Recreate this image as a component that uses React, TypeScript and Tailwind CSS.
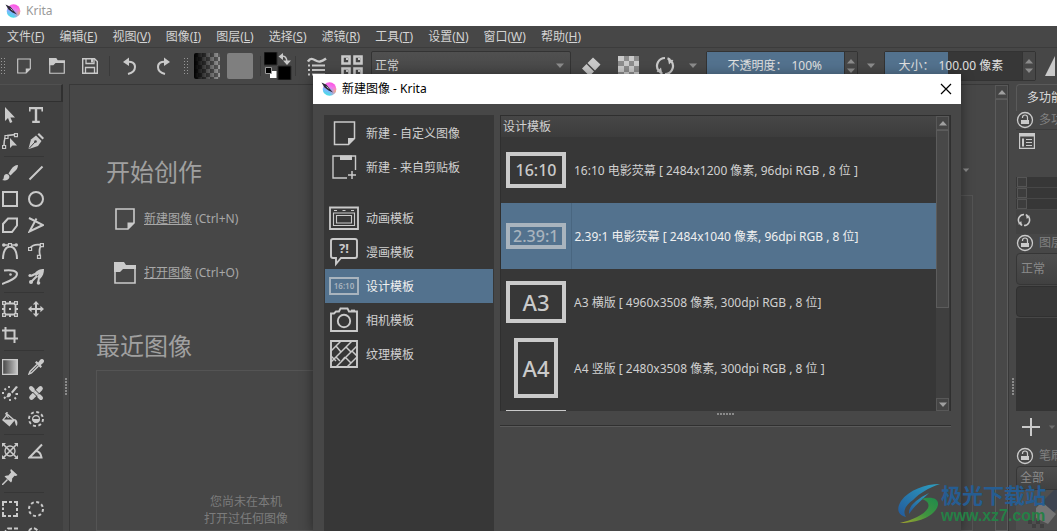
import React from 'react';

interface IconProps {
  className?: string;
  box?: string;
  children: React.ReactNode;
}

const Icon: React.FC<IconProps> = ({ className = 'w-4 h-4', box = '0 0 16 16', children }) => (
  <svg className={`shrink-0 ${className}`} viewBox={box} fill="none" stroke="currentColor" aria-hidden="true">
    {children}
  </svg>
);

const solid = { fill: 'currentColor', stroke: 'none' };

/* Shared icons */
const KritaLogo = () => (
  <Icon className="w-4 h-4">
    <defs>
      <linearGradient id="kritaHue" x1="0.65" y1="0" x2="0.3" y2="1">
        <stop offset="0" stopColor="#ff4fe0" />
        <stop offset="0.35" stopColor="#f07af0" />
        <stop offset="0.6" stopColor="#7fb4ff" />
        <stop offset="1" stopColor="#3fe6e0" />
      </linearGradient>
      <radialGradient id="kritaWarm" cx="1" cy="0.7" r="0.5">
        <stop offset="0" stopColor="#ffb060" />
        <stop offset="1" stopColor="#ff7ad0" stopOpacity="0" />
      </radialGradient>
    </defs>
    <circle cx="8.500" cy="8" r="6.800" fill="url(#kritaHue)" stroke="none" />
    <circle cx="8.500" cy="8" r="6.800" fill="url(#kritaWarm)" stroke="none" />
    <path d="M0.5 1.5 5.500 3.800 8.500 7.500l3.500 4-4.500-2L3.500 6.500Z" fill="#2b2b38" stroke="none" />
    <path d="M5.500 5.500 7.500 7.500" stroke="#d8d8d8" strokeWidth=".8" />
  </Icon>
);

const PageIcon = ({ className }: { className?: string }) => (
  <Icon className={className} box="0 0 20 22">
    <path d="M1 1h18v14l-6 6H1Z" strokeWidth="1.6" />
    <path d="M19.5 14.5h-7v7Z" {...solid} />
  </Icon>
);

const FolderIcon = ({ className }: { className?: string }) => (
  <Icon className={className} box="0 0 22 22">
    <path d="M1 4v17h20V4" strokeWidth="1.6" />
    <path d="M0 0h10l2 3h10v4H9L6 10H0Z" {...solid} />
  </Icon>
);

const Caret = ({ className = 'w-2.5 h-1.5' }: { className?: string }) => (
  <Icon className={className} box="0 0 10 6">
    <path d="M1 .5h8L5 5Z" {...solid} />
  </Icon>
);

const CaretUp = () => (
  <Icon className="w-2.5 h-1.5" box="0 0 10 6">
    <path d="M1 5.5h8L5 1Z" {...solid} />
  </Icon>
);

const ReloadIcon = ({ className }: { className?: string }) => (
  <Icon className={className} box="0 0 20 20">
    <path d="M10 2a8 8 0 0 0-6.500 12.600M10 18a8 8 0 0 0 6.500-12.600" strokeWidth="2.2" />
    <path d="M12.500 2.400a8 8 0 0 1 2.800 1.600M7.500 17.600a8 8 0 0 1-2.800-1.600" strokeWidth="2.2" />
    <path d="M1.500 16 7 16.500 6 11.500ZM18.500 4 13 3.500l1 5Z" {...solid} />
  </Icon>
);

const LockIcon = () => (
  <Icon className="w-[18px] h-[18px] text-[#cacaca]" box="0 0 18 18">
    <circle cx="9" cy="9" r="7.5" strokeWidth="1.3" />
    <path d="M6.500 7V6.500a2.500 2.500 0 0 1 5 0V9" strokeWidth="1.2" />
    <path d="M5 9h8v4H5Z" {...solid} />
  </Icon>
);

/* Toolbox icons, split in the groups the box shows */
const toolGroups: { name: string; art: React.ReactNode }[][] = [
  [
    { name: '选择形状', art: <path d="M3 0v14l3-3 2 5 2.4-1-2-4.6H13Z" {...solid} /> },
    { name: '文本', art: <path d="M1 0h14v4.5h-1.6V2.2H9.2v11.6h2.6V16H4.2v-2.2h2.6V2.2H2.6v2.3H1Z" {...solid} /> },
    {
      name: '编辑形状',
      art: (
        <>
          <path d="M2 12.5C2 7 3 3.5 5 3m0-.5L13 1.600" strokeWidth="1.6" />
          <path d="M.6 12.500h3v3h-3ZM3 2.500h3v3H3ZM12.500.6h3v3h-3Z" fill="#404040" strokeWidth="1.2" />
          <path d="M8 5v10l2.500-2.500H15Z" {...solid} />
        </>
      ),
    },
    {
      name: '书法',
      art: (
        <>
          <path d="M.5 15.500 3 6.500l5-4 5.500 5.500-3.500 5-9 3Z" {...solid} />
          <path d="M9.500 1.500 11 0l5 5-1.500 1.500Z" {...solid} />
          <path d="M1 15.500 7 9" stroke="#404040" />
          <circle cx="7.500" cy="8.500" r="1.300" fill="#404040" stroke="none" />
        </>
      ),
    },
  ],
  [
    {
      name: '手绘笔刷',
      art: (
        <path d="M0 15c2-.5 1.500-2 2-4 .6-2 3-2.600 4.500-1.200 1.600 1.500 1 4-1 5C4 15.600 2 15.500 0 15ZM6.500 8.500 9 4.500C11 1.500 13 0 16 0c0 3-1.500 5-4 7L8.500 10.500Z" {...solid} />
      ),
    },
    { name: '直线', art: <path d="M1.500 14.500l13-13" strokeWidth="2" /> },
    { name: '矩形', art: <path d="M1 1h14v14H1Z" strokeWidth="2" /> },
    { name: '椭圆', art: <circle cx="8" cy="8" r="7" strokeWidth="2" /> },
    { name: '多边形', art: <path d="M6 1.500h9v7L10 15H1V7Z" strokeWidth="2" /> },
    { name: '折线', art: <path d="M1 1l14 7L1.500 14.500 8.500 1.500" strokeWidth="2" /> },
    {
      name: '贝塞尔曲线',
      art: (
        <>
          <path d="M1 16C1 8 4 3.500 8 3.500S15 8 15 16" strokeWidth="2" />
          <path d="M2 2h12" strokeWidth="1.500" />
          <circle cx="1.800" cy="2" r="1.800" {...solid} />
          <circle cx="14.200" cy="2" r="1.800" {...solid} />
          <path d="M6.500.6h3v3h-3Z" fill="#404040" strokeWidth="1.200" />
        </>
      ),
    },
    {
      name: '手绘路径',
      art: (
        <>
          <path d="M2 5C5 1 9 1 14 2M14 2c-3 2-3 6-2 11" strokeWidth="1.800" />
          <path d="M.6 4.500h3v3h-3ZM12.400.6h3v3h-3ZM9.500 12.400h3v3h-3Z" fill="#404040" strokeWidth="1.200" />
        </>
      ),
    },
    {
      name: '力学笔刷',
      art: (
        <>
          <path d="M2 1.500C10 .5 15 2 15 5c0 4-7 7-15 10" strokeWidth="2" />
          <circle cx="8.500" cy="5.500" r="1.300" {...solid} />
        </>
      ),
    },
    {
      name: '多路笔刷',
      art: (
        <>
          <path d="M6 5c3-4 6-5 10-5 0 4-1 7-4 10l-3-2 2-3-3 2Z" {...solid} />
          <path d="M7 5 3 7M9 7l-6 6M11 9l-1 5" strokeWidth="2" />
          <circle cx="2" cy="6.500" r="1.600" {...solid} />
          <circle cx="3" cy="13" r="2" {...solid} />
          <circle cx="10.500" cy="14" r="1.800" {...solid} />
        </>
      ),
    },
  ],
  [
    {
      name: '变换',
      art: (
        <>
          <path d="M2.500 2.500h11v11h-11Z" strokeWidth="1.800" />
          <path d="M0 0h4v4H0ZM12 0h4v4h-4ZM0 12h4v4H0ZM12 12h4v4h-4ZM7 0h2v3H7ZM7 13h2v3H7ZM0 7h3v2H0ZM13 7h3v2h-3ZM7 7h2v2H7Z" {...solid} />
          <path d="M1.300 1.300h1.500v1.500H1.300ZM13.200 1.300h1.500v1.500h-1.500ZM1.300 13.200h1.500v1.500H1.300ZM13.200 13.200h1.500v1.500h-1.500Z" fill="#404040" stroke="none" />
        </>
      ),
    },
    {
      name: '移动',
      art: (
        <>
          <path d="M8 2v12M2 8h12" strokeWidth="2" />
          <path d="M8 0l3.200 3.600H4.800ZM8 16l3.200-3.600H4.800ZM0 8l3.600-3.200v6.400ZM16 8l-3.600-3.200v6.400Z" {...solid} />
        </>
      ),
    },
    { name: '裁剪', art: <path d="M3.500 0v11.500H16M0 3.500h12.500V16" strokeWidth="2" /> },
  ],
  [
    {
      name: '渐变',
      art: (
        <>
          <defs>
            <linearGradient id="toolGradient">
              <stop offset="0" stopColor="#444" />
              <stop offset="1" stopColor="#c8c8c8" />
            </linearGradient>
          </defs>
          <path d="M.6.6h14.800v14.800H.6Z" fill="url(#toolGradient)" strokeWidth="1.200" />
        </>
      ),
    },
    {
      name: '拾色器',
      art: (
        <>
          <path d="M9 5.500 2 12.500 1 15l2.500-1 7-7" strokeWidth="1.400" />
          <path d="M7 3.500 8.500 2l1.700 1.500L12 1c1-1.200 3-1.200 3.700 0 .6.900.4 2-.6 3l-2.300 2 1.200 1.500L12.500 9Z" {...solid} />
        </>
      ),
    },
    {
      name: '智能上色',
      art: (
        <>
          <path d="M4 12c1-.5 1-1.500 1.300-2.800.5-1.500 2-2 3.200-1 1 1 .6 2.800-.7 3.500-1.200.6-2.600.6-3.800.3ZM9 7l5-6 2 1-5.500 6.500Z" {...solid} />
          <path d="M7 1v2M2.500 3.500 4 5M0 8h2M2 13.500 3.500 12M8 14v2M12.500 12.500 14 14M13.500 9H16" strokeWidth="1.800" />
        </>
      ),
    },
    {
      name: '智能补丁',
      art: (
        <>
          <path d="M3.500 12.500l9-9" strokeWidth="4.600" strokeLinecap="round" />
          <path d="M3 3l2 2M11 11l2 2" strokeWidth="4" strokeLinecap="round" />
          <path d="M4.500 7 9 11.500M7 4.500l4.500 4.500" stroke="#404040" strokeWidth="1" />
        </>
      ),
    },
    {
      name: '填充',
      art: (
        <>
          <path d="M5 1l-1 7" strokeWidth="1.500" />
          <path d="M5.500 2.500l7.500 6.500-5.500 6.500L0 9Z" {...solid} />
          <path d="M5.500 4.500 10.500 8.500H2Z" fill="#404040" stroke="none" />
          <path d="M3.500 2 6.500 7" strokeWidth="1.200" />
          <path d="M12 8c3 0 4 3 3 6.500-.5.5-1 .3-1.200-.5Z" {...solid} />
        </>
      ),
    },
    {
      name: '围选填充',
      art: (
        <>
          <circle cx="8" cy="8" r="7" strokeWidth="1.900" strokeDasharray="3 2.500" />
          <circle cx="8" cy="8" r="3.400" strokeWidth="1.200" />
          <path d="M4.500 8h7a3.500 3.500 0 0 1-7 0Z" {...solid} />
        </>
      ),
    },
  ],
  [
    {
      name: '辅助尺',
      art: (
        <>
          <path d="M1 1l14 14M15 1 1 15" strokeWidth="1.600" />
          <circle cx="8" cy="8" r="5" strokeWidth="1.300" />
          <path d="M0 0h4L0 4ZM16 0v4l-4-4ZM0 16v-4l4 4ZM16 16h-4l4-4Z" {...solid} />
        </>
      ),
    },
    { name: '测量', art: <path d="M14 1.500 1.500 14.500H13.500C13 11 11 8.500 8 8" strokeWidth="2" /> },
    {
      name: '参考图像',
      art: (
        <>
          <path d="M9 0l6.500 6-1.500 1-1.500-.2-2.500 3c.4 1.500 0 2.700-1 3.700L2.500 7.500c1-1 2.500-1.300 3.800-1L9 3.500 8.300 1.500Z" {...solid} />
          <path d="M5.500 10.500 0 16" strokeWidth="1.500" />
        </>
      ),
    },
  ],
  [
    { name: '矩形选区', art: <path d="M1 5V1h4M7 1h3M12 1h3v4M15 7v3M15 12v3h-4M9 15H6M4 15H1v-4M1 9V6.500" strokeWidth="2" /> },
    { name: '椭圆选区', art: <circle cx="8" cy="8" r="7" strokeWidth="2" strokeDasharray="3 2.500" /> },
    { name: '多边形选区', art: <path d="M6 1.500h9v7L10 15H1V7Z" strokeWidth="2" strokeDasharray="4 2" /> },
    { name: '手绘选区', art: <path d="M1 4c2-4 6-3 8-1s5 2 5 6-4 6-8 5-5-6-5-10Z" strokeWidth="2" strokeDasharray="4 2" /> },
  ],
];

const menus = [
  ['文件', 'F'],
  ['编辑', 'E'],
  ['视图', 'V'],
  ['图像', 'I'],
  ['图层', 'L'],
  ['选择', 'S'],
  ['滤镜', 'R'],
  ['工具', 'T'],
  ['设置', 'N'],
  ['窗口', 'W'],
  ['帮助', 'H'],
];

const Grip = ({ className }: { className?: string }) => (
  <div className={`shrink-0 w-[5px] h-[18px] bg-[radial-gradient(#999_0.8px,transparent_1px)] bg-size-[3px_3px] ${className}`} />
);

const Separator = () => <div className="shrink-0 w-px h-5 mx-[3px] bg-[#3a3a3a]" />;

interface ToolButtonProps {
  label: string;
  className?: string;
  children: React.ReactNode;
}

const ToolButton: React.FC<ToolButtonProps> = ({ label, className = 'w-[33px]', children }) => (
  <button aria-label={label} className={`shrink-0 h-8 flex items-center justify-center ${className}`}>
    {children}
  </button>
);

interface SliderSpinProps {
  id: string;
  label: string;
  value: string;
  percent: number;
  field: string;
}

const SliderSpin: React.FC<SliderSpinProps> = ({ id, label, value, percent, field }) => (
  <div className="shrink-0 w-[152px] h-[30px] mx-[3px] flex bg-[#373737] border border-[#333] rounded-xs text-xs text-[#e0e0e0]">
    <div className="relative flex-1 flex items-center justify-center gap-1">
      <div className="absolute inset-y-0 left-0 bg-[#53728e]" style={{ width: `${percent}%` }} />
      <label htmlFor={id} className="relative">{label}</label>
      <input id={id} defaultValue={value} className={`relative bg-transparent outline-none ${field}`} />
    </div>
    <div className="w-[13px] flex flex-col items-center justify-between py-1.5 bg-[#474747] border-l border-[#333] text-[#8c8c8c]">
      <CaretUp />
      <Caret />
    </div>
  </div>
);

const Toolbar = () => (
  <div className="shrink-0 h-9 flex items-center overflow-hidden text-[#cacaca]">
    <Grip className="mr-0.5" />
    <ToolButton label="新建"><PageIcon className="w-[14px] h-4" /></ToolButton>
    <ToolButton label="打开"><FolderIcon className="w-4 h-4" /></ToolButton>
    <ToolButton label="保存">
      <Icon>
        <path d="M.7.700h11.800l2.800 2.800v11.800H.7Z" strokeWidth="1.400" />
        <path d="M4 1v4.500h8V1M3.500 15V9.500h9V15" strokeWidth="1.300" />
        <path d="M9 1h2v3.500H9Z" {...solid} />
      </Icon>
    </ToolButton>
    <Separator />
    <ToolButton label="撤销">
      <Icon className="w-4 h-[18px]" box="0 0 16 18">
        <path d="M4 5c6-1 9 1 9 5s-3 6-7 7" strokeWidth="2" />
        <path d="M1 5l6-4.500v8.500Z" {...solid} />
      </Icon>
    </ToolButton>
    <ToolButton label="重做">
      <Icon className="w-4 h-[18px]" box="0 0 16 18">
        <path d="M12 5C6 4 3 6 3 10s3 6 7 7" strokeWidth="2" />
        <path d="M15 5 9 .5V9Z" {...solid} />
      </Icon>
    </ToolButton>
    <Grip className="mx-1" />
    <div className="shrink-0 flex gap-[7px] pl-0.5 pr-1">
      <button
        aria-label="渐变"
        className="w-[26px] h-[26px] rounded-xs bg-[linear-gradient(to_right,#000,transparent),repeating-conic-gradient(#9a9a9a_0_25%,#5c5c5c_0_50%)] bg-size-[26px_26px,8px_8px]"
      />
      <button aria-label="图案" className="w-[26px] h-[26px] rounded-xs bg-[#7f7f7f]" />
    </div>
    <Separator />
    <button aria-label="前景色与背景色" className="shrink-0">
      <Icon className="w-7 h-7" box="0 0 28 28">
        <path d="M0 0h13v13H0ZM14 14h13v14H14Z" fill="#000" stroke="#2c2c2c" />
        <path d="M6 19h6.500v7H6Z" fill="#fff" stroke="none" />
        <path d="M1.500 15.500h6v6h-6Z" fill="#000" stroke="#9a9a9a" />
        <path d="M17 4c4-.5 6 1.500 6 7" strokeWidth="1.500" />
        <path d="M14.500 4.500 19 1v7ZM19 8.500h8L23 13Z" {...solid} />
      </Icon>
    </button>
    <Separator />
    <ToolButton label="笔刷选项" className="w-[35px]">
      <Icon className="w-5 h-5" box="0 0 20 20">
        <path d="M1 5.500C5-1 9 7 13 5.500c3-.5 4-1.500 6-3" strokeWidth="2.400" />
        <path d="M1 9.500h2M1 14h2M1 18.500h2M5 9.500h13M5 14h13M5 18.500h13" strokeWidth="1.800" />
      </Icon>
    </ToolButton>
    <ToolButton label="笔刷预设" className="w-[35px]">
      <Icon className="w-[22px] h-[22px]" box="0 0 22 22">
        <path d="M1.500 1.500h7v7h-7ZM13.500 1.500h7v7h-7ZM1.500 13.500h7v7h-7ZM13.500 13.500h7v7h-7Z" strokeWidth="2.600" />
        <path d="M5 3h2v2H5ZM17 3h2v2h-2ZM5 15h2v2H5ZM17 15h2v2h-2Z" {...solid} />
      </Icon>
    </ToolButton>
    <div className="relative shrink-0 mx-0.5">
      <select
        aria-label="混合模式"
        className="appearance-none w-[200px] h-[30px] px-[3px] bg-linear-to-b from-[#505050] to-[#444] border border-[#333] rounded-xs text-xs text-[#d0d0d0]"
      >
        <option>正常</option>
      </select>
      <div className="absolute inset-y-0 right-1.5 flex items-center text-[#8c8c8c] pointer-events-none">
        <Caret />
      </div>
    </div>
    <ToolButton label="橡皮擦" className="w-9">
      <Icon className="w-5 h-5" box="0 0 20 20">
        <path d="M12 1.500l7.500 7-5.500 6-7.500-7.500ZM5.500 8l7.500 7.500-3 3H7L1 12.500Z" {...solid} />
      </Icon>
    </ToolButton>
    <ToolButton label="锁定透明度" className="w-[38px]">
      <Icon className="w-[21px] h-[21px]" box="0 0 21 21">
        <path d="M0 0h21v21H0Z" fill="#8d8d8d" stroke="none" />
        <path d="M0 0h6v5H0ZM11 0h5v5h-5ZM6 5h5v5H6ZM16 5h5v5h-5ZM0 10h6v6H0ZM11 10h5v6h-5ZM6 16h5v5H6ZM16 16h5v5h-5Z" {...solid} />
      </Icon>
    </ToolButton>
    <ToolButton label="重新载入预设" className="w-9"><ReloadIcon className="w-5 h-5" /></ToolButton>
    <ToolButton label="更多" className="w-5 text-[#8c8c8c]"><Caret /></ToolButton>
    <SliderSpin id="opacity" label="不透明度：" value="100%" percent={100} field="w-8" />
    <ToolButton label="更多" className="w-5 text-[#8c8c8c]"><Caret /></ToolButton>
    <SliderSpin id="size" label="大小：" value="100.00 像素" percent={46} field="w-[70px]" />
    <ToolButton label="水平镜像" className="w-8">
      <Icon className="w-5 h-5" box="0 0 20 20">
        <path d="M10 0v20H0Z" {...solid} />
      </Icon>
    </ToolButton>
  </div>
);

const Toolbox = () => (
  <aside className="shrink-0 w-[63px] bg-[#404040] text-[#cacaca]">
    <div className="h-[18px] bg-[#454545] border-t border-r-2 border-b border-t-[#505050] border-r-[#303030] border-b-[#303030]" />
    {toolGroups.map((group, index) => (
      <div key={index}>
        {index > 0 && <div className="h-1.5 pt-0.5 pl-1"><div className="w-10 h-px bg-[#363636]" /></div>}
        <div className="grid grid-cols-[16px_16px] gap-x-2.5 pl-0.5">
          {group.map(tool => (
            <button key={tool.name} aria-label={tool.name} className="h-[26px] flex items-center">
              <Icon>{tool.art}</Icon>
            </button>
          ))}
        </div>
      </div>
    ))}
  </aside>
);

const Splitter = ({ className }: { className?: string }) => (
  <div className={`shrink-0 flex flex-col items-center pt-[294px] ${className}`}>
    <div className="w-0.5 h-[18px] bg-[repeating-linear-gradient(#8a8a8a_0_2px,transparent_2px_3px)]" />
  </div>
);

interface ScrollTrackProps {
  thumb: string;
  withEnd?: boolean;
}

const ScrollTrack: React.FC<ScrollTrackProps> = ({ thumb, withEnd }) => (
  <div className="shrink-0 w-[13px] h-full flex flex-col bg-[#3f3f3f] text-[#a0a0a0]">
    <div className="shrink-0 h-[14px] flex items-center justify-center bg-[#454545] border border-[#585858]"><CaretUp /></div>
    <div className={`bg-[#484848] border border-[#5c5c5c] ${thumb}`} />
    {withEnd && (
      <div className="shrink-0 h-[13px] mt-auto flex items-center justify-center bg-[#454545] border border-[#585858]"><Caret /></div>
    )}
  </div>
);

const Welcome = () => (
  <main className="flex-1 min-w-0 flex border-t border-l border-[#383838] overflow-hidden">
    <div className="flex-1 flex pl-[26px] pr-[22px] pt-[71px]">
      <div className="shrink-0 w-[300px] flex flex-col">
        <h1 className="pl-2.5 text-2xl leading-8 text-[#a0a0a0]">开始创作</h1>
        <div className="mt-1 pl-[18px] text-xs text-[#a8a8a8]">
          <div className="h-[54px] flex items-center gap-2">
            <span className="w-[22px] flex justify-center text-[#cacaca]"><PageIcon className="w-5 h-[22px]" /></span>
            <p><a href="#new" className="underline">新建图像</a> (Ctrl+N)</p>
          </div>
          <div className="h-[54px] flex items-center gap-2">
            <FolderIcon className="w-[22px] h-[22px] text-[#cacaca]" />
            <p><a href="#open" className="underline">打开图像</a> (Ctrl+O)</p>
          </div>
        </div>
        <h2 className="mt-[30px] text-2xl leading-8 text-[#a0a0a0]">最近图像</h2>
        <div className="flex-1 mt-2 pt-[122px] border border-[#545454] text-center text-xs leading-[17px] text-[#7c7c7c]">
          <p>您尚未在本机</p>
          <p>打开过任何图像</p>
        </div>
      </div>
      <div className="flex-1 flex flex-col pl-5">
        <div className="h-7 pr-[3px] flex items-center justify-end text-[#8c8c8c]"><Caret className="w-2 h-[5px]" /></div>
        <div className="flex-1 mt-[11px] border border-[#545454]" />
      </div>
    </div>
    <ScrollTrack thumb="flex-1" />
  </main>
);

const DockTitle = ({ children }: { children: React.ReactNode }) => (
  <div className="shrink-0 h-[18px] flex items-center gap-[5px] text-xs text-[#808080] whitespace-nowrap">
    <LockIcon />
    {children}
  </div>
);

const Dockers = () => (
  <aside className="shrink-0 w-[41px] flex flex-col overflow-hidden text-xs">
    <button className="shrink-0 w-20 h-[27px] pl-2.5 text-left whitespace-nowrap border-t border-l border-[#5a5a5a] rounded-tl-sm text-[#dcdcdc]">
      多功能
    </button>
    <DockTitle>多功</DockTitle>
    <div className="shrink-0 h-12 pt-[3px] pl-[3px] border-t border-[#3c3c3c] text-[#cacaca]">
      <Icon>
        <path d="M.6 1h14.800v14.400H.6Z" strokeWidth="1.200" />
        <path d="M0 0h16v3.500H0ZM3 5.500h2v8H3Z" {...solid} />
        <path d="M7 6.500h6M7 9.500h6M7 12.500h6" strokeWidth="1.200" />
      </Icon>
    </div>
    {[0, 1, 2].map(row => (
      <div key={row} className="shrink-0 h-[11px] w-14 pl-px bg-[#373737] border-b border-[#474747]">
        <div className="w-2.5 h-2.5 border border-[#555] bg-[#3d3d3d]" />
      </div>
    ))}
    <div className="shrink-0 h-6 pt-[3px] pl-px bg-[#424242] text-[#cacaca]">
      <ReloadIcon className="w-3.5 h-3.5" />
    </div>
    <DockTitle>图层</DockTitle>
    <select aria-label="图层混合模式" className="shrink-0 appearance-none w-24 h-8 mt-px px-1 bg-linear-to-b from-[#4e4e4e] to-[#414141] border border-[#363636] rounded-sm text-[#8a8a8a]">
      <option>正常</option>
    </select>
    <div className="shrink-0 w-24 h-[31px] mt-px bg-[#383838] border border-[#303030] rounded-sm" />
    <div className="shrink-0 h-[93px] mt-px bg-[#343434]" />
    <div className="shrink-0 h-8 w-24 mb-1 pl-1.5 flex items-center gap-2">
      <button aria-label="添加图层" className="text-[#cacaca]">
        <Icon className="w-[18px] h-[18px]" box="0 0 18 18"><path d="M9 0v18M0 9h18" strokeWidth="2" /></Icon>
      </button>
      <span className="text-[#6c6c6c]"><Caret className="w-2 h-[5px]" /></span>
    </div>
    <DockTitle>笔刷</DockTitle>
    <select aria-label="笔刷标签" className="shrink-0 appearance-none w-24 h-6 mt-px px-[3px] bg-linear-to-b from-[#4e4e4e] to-[#414141] border border-[#363636] rounded-sm text-[#8a8a8a]">
      <option>全部</option>
    </select>
    <Icon className="w-[42px] h-10" box="0 0 42 40">
      <path d="M0 0h42v40H0Z" fill="#4f4f4f" stroke="none" />
      <path d="M26 12 38 0h4v18l-6 6Z" fill="#3d4450" stroke="none" />
      <path d="M26 12l14 12-8 10-12-6V18Z" fill="#747474" stroke="none" />
      <path d="M12 30h4v4h-4ZM20 30h4v4h-4ZM16 34h4v4h-4ZM24 34h4v4h-4Z" fill="#404040" stroke="none" />
    </Icon>
  </aside>
);

/* New image dialog */
const sources = [
  {
    label: '新建 - 自定义图像',
    art: (
      <>
        <path d="M5.500 4h20v16.500l-6 6h-14Z" strokeWidth="1.500" />
        <path d="M26 20h-7v7Z" {...solid} />
      </>
    ),
  },
  {
    label: '新建 - 来自剪贴板',
    art: (
      <>
        <path d="M18 26H4V4h22.500v14" strokeWidth="1.400" />
        <path d="M11 3.500h12v4.500H11Z" {...solid} />
        <path d="M23 19v8M19 23h8" strokeWidth="1.500" />
      </>
    ),
  },
];

const categories = [
  {
    label: '动画模板',
    art: (
      <>
        <path d="M1 4.500h28v21.500H1Z" strokeWidth="1.800" />
        <path d="M4.500 10h21v12.500h-21ZM7.500 12.500h15v7.500h-15Z" strokeWidth="1.100" />
        <path d="M5 7.500h3M13.500 7.500h3M22 7.500h3" strokeWidth="1.200" />
      </>
    ),
  },
  {
    label: '漫画模板',
    art: (
      <>
        <path d="M4 2h22q2 0 2 2v15q0 2-2 2H12l-5 6v-6H4q-2 0-2-2V4q0-2 2-2Z" strokeWidth="1.900" />
        <text x="15" y="16" textAnchor="middle" fontSize="13" fontWeight="700" fill="currentColor" stroke="none">?!</text>
      </>
    ),
  },
  {
    label: '设计模板',
    selected: true,
    art: (
      <>
        <path d="M1 7h28v16H1Z" strokeWidth="1.900" />
        <text x="15" y="18" textAnchor="middle" fontSize="8" fontWeight="600" fill="currentColor" stroke="none">16:10</text>
      </>
    ),
  },
  {
    label: '相机模板',
    art: (
      <>
        <path d="M2 8.500h3l2-2h3l1.500-3h7l1.500 3H28V26H2Z" strokeWidth="1.900" />
        <circle cx="15" cy="16" r="6.200" strokeWidth="1.900" />
        <path d="M22 5.500h4" strokeWidth="1.800" />
      </>
    ),
  },
  {
    label: '纹理模板',
    art: (
      <>
        <path d="M2 2h26v26H2Z" strokeWidth="1.900" />
        <path d="M2 12 12 2M2 23 23 2M7 28 28 7M18 28l10-10M7 7l5 6M2 17l5 5M17 8l5 5M12 23l4-5M16 18l6 6M23 12l5 5M7 18l4 4" strokeWidth="1.500" />
      </>
    ),
  },
];

const templates = [
  { badge: '16:10', frame: 'w-[60px] h-9 text-base', label: '16:10 电影荧幕 [ 2484x1200 像素, 96dpi RGB , 8 位 ]' },
  { badge: '2.39:1', frame: 'w-[60px] h-[26px] text-base', label: '2.39:1 电影荧幕 [ 2484x1040 像素, 96dpi RGB , 8 位]', selected: true },
  { badge: 'A3', frame: 'w-[60px] h-[42px] text-[22px]', label: 'A3 横版 [ 4960x3508 像素, 300dpi RGB , 8 位]' },
  { badge: 'A4', frame: 'w-11 h-[60px] text-[22px]', label: 'A4 竖版 [ 2480x3508 像素, 300dpi RGB , 8 位 ]' },
  { badge: '', frame: 'w-[60px] h-12', label: '' },
];

interface NavItemProps {
  label: string;
  art: React.ReactNode;
  selected?: boolean;
}

const NavItem: React.FC<NavItemProps> = ({ label, art, selected }) => (
  <button
    className={`w-full h-[34px] pl-1 flex items-center gap-[7px] text-xs ${
      selected ? 'bg-[#53728e] text-[#f0f0f0]' : 'text-[#d0d0d0]'
    }`}
  >
    <span className={selected ? 'text-[#a9b4be]' : 'text-[#cacaca]'}>
      <Icon className="w-[30px] h-[30px]" box="0 0 30 30">{art}</Icon>
    </span>
    <span className="pt-0.5">{label}</span>
  </button>
);

const NewImageDialog = () => (
  <div role="dialog" aria-label="新建图像" className="absolute top-[74px] bottom-0 left-[313px] w-[648px] flex flex-col bg-[#474747] shadow-[0_2px_12px_rgba(0,0,0,0.45)]">
    <div className="shrink-0 h-[30px] pl-2 pr-[9px] flex items-center bg-white text-xs text-black">
      <KritaLogo />
      <span className="ml-[5px] flex-1">新建图像 - Krita</span>
      <button aria-label="关闭">
        <Icon className="w-3 h-3" box="0 0 12 12"><path d="M1 1l10 10M11 1 1 11" strokeWidth="1.200" /></Icon>
      </button>
    </div>
    <div className="flex-1 min-h-0 flex gap-1.5 pl-[11px] pr-2.5 pt-[11px]">
      <nav className="shrink-0 w-[170px] p-px bg-[#373737]">
        {sources.map(item => <NavItem key={item.label} {...item} />)}
        <div className="h-[17px]" />
        {categories.map(item => <NavItem key={item.label} {...item} />)}
      </nav>
      <div className="flex-1 min-w-0">
        <div className="h-[296px] pr-px flex overflow-hidden bg-[#373737] border-t border-x border-[#2f2f2f]">
          <div className="flex-1">
            <table className="w-full border-collapse text-xs text-[#d0d0d0]">
              <thead>
                <tr className="h-[21px] bg-linear-to-b from-[#474747] to-[#3c3c3c]">
                  <th colSpan={2} className="p-0 pl-0.5 text-left font-normal">设计模板</th>
                </tr>
              </thead>
              <tbody>
                {templates.map(item => (
                  <tr key={item.badge} className={`h-[66px] ${item.selected ? 'bg-[#53728e] text-[#f0f0f0]' : ''}`}>
                    <td className={`w-[70px] p-0 ${item.selected ? 'border-r border-[#496680]' : ''}`}>
                      <div
                        className={`mx-auto flex items-center justify-center border-4 leading-none font-medium ${item.frame} ${
                          item.selected ? 'border-[#a9b4be] text-[#a9b4be]' : 'border-[#cacaca] text-[#cacaca]'
                        }`}
                      >
                        {item.badge}
                      </div>
                    </td>
                    <td className="p-0 pt-0.5 pl-[3px]">{item.label}</td>
                  </tr>
                ))}
              </tbody>
            </table>
          </div>
          <ScrollTrack thumb="h-[178px]" withEnd />
        </div>
        <div className="h-[15px] pt-0.5 border-b border-[#303030]">
          <div className="w-[18px] h-0.5 mx-auto bg-[repeating-linear-gradient(to_right,#8a8a8a_0_2px,transparent_2px_3px)]" />
        </div>
        <div className="h-px bg-[#5a5a5a]" />
      </div>
    </div>
  </div>
);

const SiteMark = () => (
  <div className="absolute right-[11px] bottom-1.5 flex items-center pointer-events-none">
    <Icon className="w-[46px] h-[42px]" box="0 0 46 42">
      <defs>
        <linearGradient id="markLeaf" x1="0" y1="1" x2="1" y2="0">
          <stop offset="0" stopColor="#a5a52c" />
          <stop offset="0.5" stopColor="#3f9440" />
          <stop offset="1" stopColor="#1f8a4c" />
        </linearGradient>
        <linearGradient id="markWave" x1="0" y1="1" x2="1" y2="0">
          <stop offset="0" stopColor="#235a9c" />
          <stop offset="1" stopColor="#2d9fc0" />
        </linearGradient>
      </defs>
      <path d="M45 1C30 1 14 7 6 18c-5 8-3 14 5 16-4-6 0-12 7-17C25 10 33 5 45 1Z" fill="url(#markWave)" stroke="none" />
      <path d="M14 31c-1-8 8-15 20-21-8 8-15 13-20 21Z" fill="url(#markWave)" stroke="none" />
      <path d="M26 16c10-3 18-1 17 6-2 10-18 18-38 18 12-3 24-8 28-15 2-5-2-8-7-9Z" fill="url(#markLeaf)" stroke="none" />
    </Icon>
    <div className="font-bold">
      <p className="text-[21px] leading-6 text-[#265d92]">极光下载站</p>
      <p className="text-base leading-[18px] text-[#258046] font-['Liberation_Sans']">www.xz7.com</p>
    </div>
  </div>
);

export default function App() {
  return (
    <div className="relative h-screen flex flex-col overflow-hidden bg-[#474747] font-['Noto_Sans','Noto_Sans_CJK_SC',sans-serif]">
      {/* Title bar */}
      <header className="shrink-0 h-[26px] pl-[5px] pb-1 flex items-center gap-[5px] bg-white text-xs text-[#999]">
        <KritaLogo />
        <span>Krita</span>
      </header>

      {/* Menu */}
      <nav className="shrink-0 h-[22px] pl-[7px] flex items-center gap-[15px] border-b border-[#3c3c3c] text-xs text-[#d4d4d4] whitespace-nowrap">
        {menus.map(([label, key]) => (
          <button key={key}>{label}(<u>{key}</u>)</button>
        ))}
      </nav>

      <Toolbar />

      {/* Workspace */}
      <div className="flex-1 min-h-0 flex">
        <Toolbox />
        <Splitter className="w-1.5" />
        <Welcome />
        <Splitter className="w-2 border-l border-[#383838]" />
        <Dockers />
      </div>

      <NewImageDialog />
      <SiteMark />
    </div>
  );
}
